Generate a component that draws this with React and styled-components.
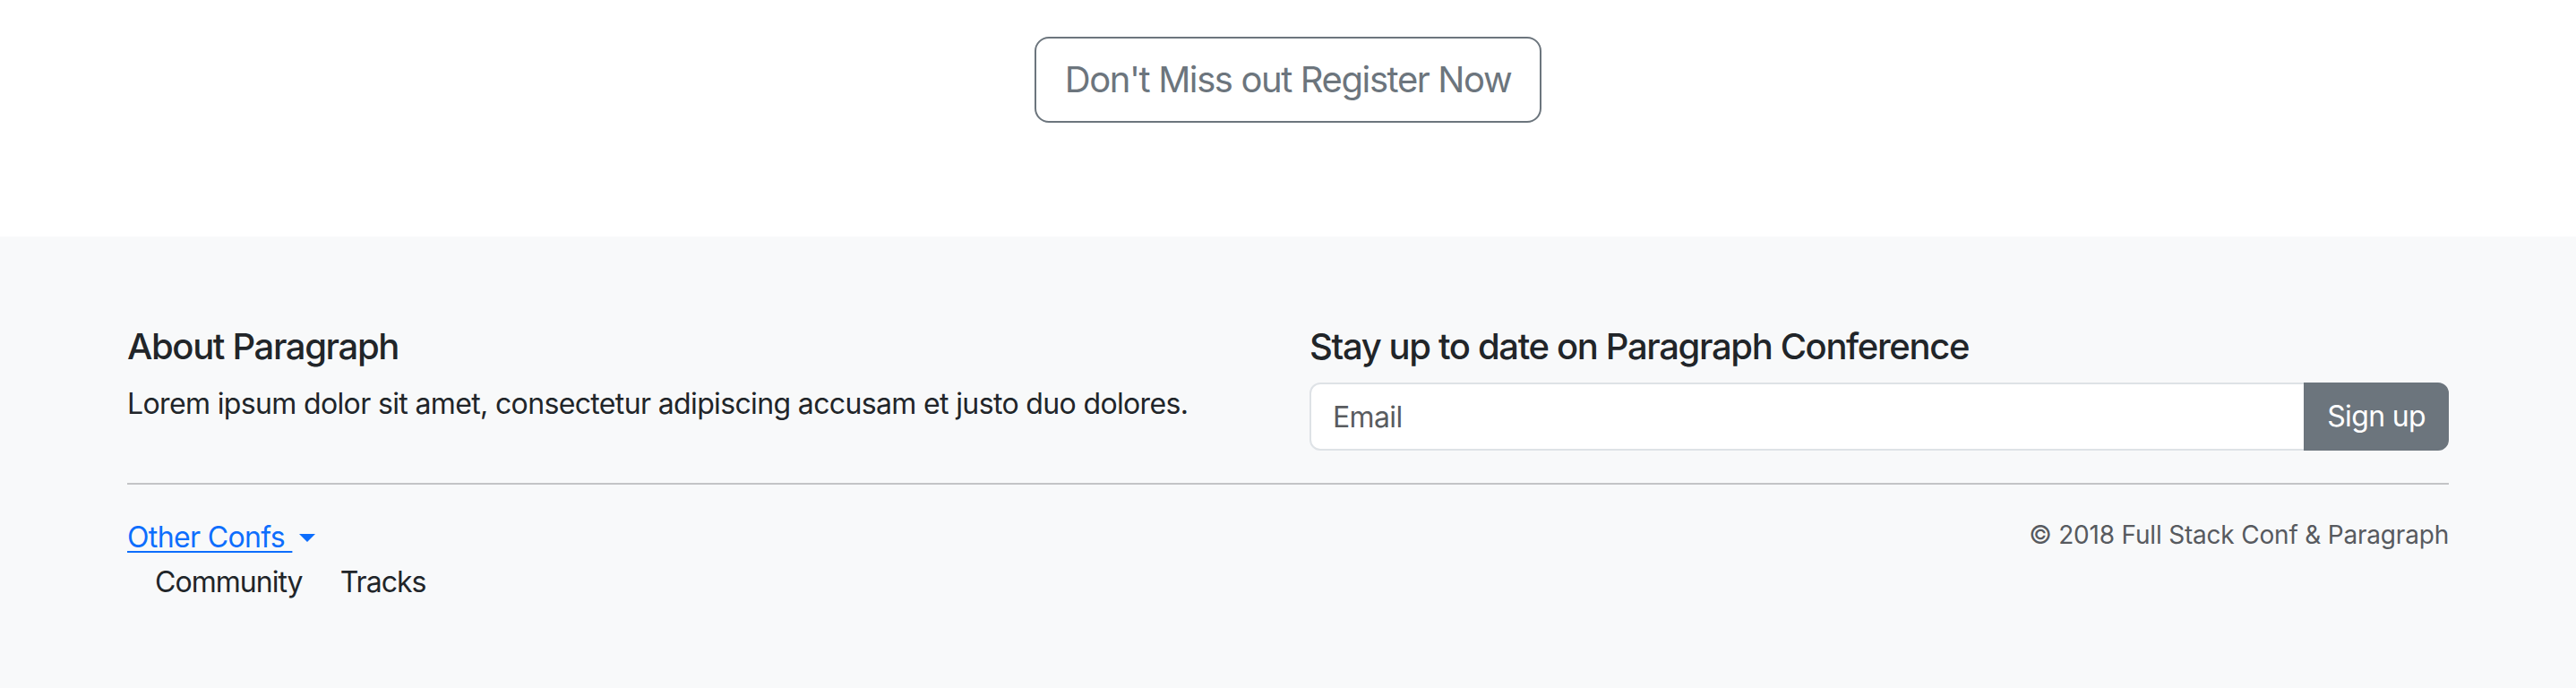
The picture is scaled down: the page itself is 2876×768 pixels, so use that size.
import React from "react";
import styled, { createGlobalStyle } from "styled-components";

const GlobalStyle = createGlobalStyle`
  html, body { margin: 0; padding: 0; }
  body {
    font-family: Inter, "Noto Sans", "Liberation Sans", sans-serif;
    color: #212529;
    background: #ffffff;
    font-size: 32px;
    line-height: 1.5;
    letter-spacing: -0.02em;
  }
  * { box-sizing: border-box; }
`;

const Hero = styled.section`
  display: flex;
  justify-content: center;
  padding: 41px 0 127px;
  background: #ffffff;
`;

const OutlineButton = styled.button`
  font-family: inherit;
  font-size: 40px;
  line-height: 60px;
  letter-spacing: -0.035em;
  padding: 16px 32px;
  border: 2px solid #6c757d;
  border-radius: 16px;
  background: transparent;
  color: #6c757d;
  cursor: pointer;
`;

const Footer = styled.footer`
  background: #f8f9fa;
  padding: 99px 0 96px;
`;

const Container = styled.div`
  max-width: 2640px;
  margin: 0 auto;
  padding: 0 24px;
`;

const TopRow = styled.div`
  display: grid;
  grid-template-columns: 1fr 1fr;
  column-gap: 48px;
`;

const Column = styled.div`
  min-width: 0;
`;

const Heading = styled.h5`
  font-size: 40px;
  font-weight: 500;
  line-height: 1.2;
  letter-spacing: -0.034em;
  margin: 0 0 16px;
  color: #212529;
`;

const Text = styled.p`
  margin: 0 0 32px;
  font-size: 32px;
  line-height: 48px;
`;

const InputGroup = styled.form`
  display: flex;
  align-items: stretch;
`;

const EmailInput = styled.input`
  flex: 1;
  min-width: 0;
  height: 76px;
  font-family: inherit;
  font-size: 32px;
  line-height: 48px;
  letter-spacing: -0.02em;
  padding: 12px 24px;
  color: #212529;
  background: #ffffff;
  border: 2px solid #dee2e6;
  border-radius: 12px 0 0 12px;
  outline: none;
  &::placeholder { color: #595c5f; }
`;

const SignUpButton = styled.button`
  font-family: inherit;
  font-size: 32px;
  line-height: 48px;
  letter-spacing: -0.02em;
  padding: 12px 24px;
  color: #ffffff;
  background: #6c757d;
  border: 2px solid #6c757d;
  border-radius: 0 12px 12px 0;
  margin-left: -2px;
  cursor: pointer;
`;

const Divider = styled.hr`
  margin: 32px 0 35px;
  border: 0;
  border-top: 2px solid #c3c4c6;
`;

const BottomRow = styled.div`
  display: flex;
  justify-content: space-between;
  align-items: flex-start;
`;

const DropdownToggle = styled.a`
  display: inline-block;
  color: #0d6efd;
  font-size: 32px;
  line-height: 48px;
  text-decoration: underline;
  text-decoration-thickness: 2px;
  text-underline-offset: 4px;
  cursor: pointer;
  &::after {
    content: "";
    display: inline-block;
    margin-left: 8px;
    vertical-align: 6px;
    border-top: 9.6px solid #0d6efd;
    border-right: 9.6px solid transparent;
    border-left: 9.6px solid transparent;
    border-bottom: 0;
  }
`;

const NavList = styled.ul`
  display: flex;
  gap: 10px;
  list-style: none;
  margin: 2px 0 0;
  padding: 0 0 0 15px;
`;

const NavLink = styled.a`
  display: block;
  padding: 0 16px;
  color: #212529;
  text-decoration: none;
  font-size: 32px;
  line-height: 48px;
  letter-spacing: -0.03em;
`;

const Copyright = styled.p`
  margin: 0;
  font-size: 28px;
  line-height: 42px;
  letter-spacing: -0.007em;
  color: #575a5f;
  text-align: right;
`;

export default function App() {
  return (
    <>
      <GlobalStyle />
      <Hero>
        <OutlineButton type="button">Don't Miss out Register Now</OutlineButton>
      </Hero>
      <Footer>
        <Container>
          <TopRow>
            <Column>
              <Heading>About Paragraph</Heading>
              <Text>
                Lorem ipsum dolor sit amet, consectetur adipiscing accusam et justo duo dolores.
              </Text>
            </Column>
            <Column>
              <Heading>Stay up to date on Paragraph Conference</Heading>
              <InputGroup onSubmit={(e) => e.preventDefault()}>
                <EmailInput type="email" placeholder="Email" />
                <SignUpButton type="submit">Sign up</SignUpButton>
              </InputGroup>
            </Column>
          </TopRow>
          <Divider />
          <BottomRow>
            <div>
              <DropdownToggle>Other Confs </DropdownToggle>
              <NavList>
                <li><NavLink>Community</NavLink></li>
                <li><NavLink>Tracks</NavLink></li>
              </NavList>
            </div>
            <Copyright>© 2018 Full Stack Conf &amp; Paragraph</Copyright>
          </BottomRow>
        </Container>
      </Footer>
    </>
  );
}
